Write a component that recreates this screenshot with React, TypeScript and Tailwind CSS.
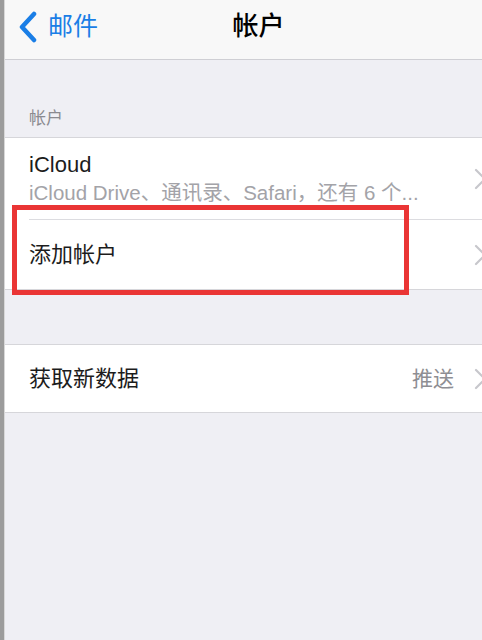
import React from "react";

const font = { fontFamily: '"Liberation Sans", "Noto Sans CJK SC", sans-serif' };

const Chevron = () => (
    <svg width="12" height="22" viewBox="0 0 12 22" className="shrink-0">
        <path d="M2 2 L11 11 L2 20" fill="none" stroke="#c7c7cc" strokeWidth="2.2" strokeLinecap="round" strokeLinejoin="round" />
    </svg>
);

const App = () => {
    return (
        <div className="flex w-[482px] h-[640px] overflow-hidden bg-[#efeff4]" style={font}>
            <div className="w-[5px] bg-[#9c9c9c] border-r border-[#d8d8d8] shrink-0"></div>
            <div className="relative flex flex-col flex-1 overflow-hidden">
                <div className="flex items-center h-[60px] pb-[6px] bg-[#f8f8f8] border-b border-[#cfcfd4]">
                    <div className="flex items-center pl-[13px] w-[160px] text-[#1a7ee6]">
                        <svg width="20" height="32" viewBox="0 0 20 32">
                            <path d="M16 3 L4 16 L16 29" fill="none" stroke="#1a7ee6" strokeWidth="4.5" strokeLinecap="round" strokeLinejoin="round" />
                        </svg>
                        <span className="ml-[10px] text-[25px] leading-none">邮件</span>
                    </div>
                    <div className="flex-1 text-center text-[26px] font-medium text-black pr-[130px]">
                        帐户
                    </div>
                </div>

                <div className="h-[77px] flex items-end px-[24px] pb-[6px] text-[17px] text-[#8a8a8f]">帐户</div>

                <div className="bg-white border-t border-b border-[#d6d6da]">
                    <div className="flex items-center h-[81px] pl-[24px]">
                        <div className="flex-1 flex flex-col min-w-0">
                            <span className="text-[22px] text-[#1c1c1c] leading-[26px]">iCloud</span>
                            <span className="text-[20.5px] text-[#a3a3a8] leading-[26px] whitespace-nowrap mt-[2px]">iCloud Drive、通讯录、Safari，还有 6 个...</span>
                        </div>
                        <div className="mr-[-4px] ml-[30px]"><Chevron /></div>
                    </div>
                    <div className="ml-[24px] h-px bg-[#dcdce0]"></div>
                    <div className="flex items-center h-[69px] pl-[24px]">
                        <span className="flex-1 text-[22px] text-[#1c1c1c]">添加帐户</span>
                        <div className="mr-[-4px]"><Chevron /></div>
                    </div>
                </div>

                <div className="h-[54px]"></div>

                <div className="bg-white border-t border-b border-[#d6d6da]">
                    <div className="flex items-center h-[67px] pl-[24px]">
                        <span className="flex-1 text-[22px] text-[#1c1c1c]">获取新数据</span>
                        <span className="text-[21px] text-[#8e8e93] mr-[20px]">推送</span>
                        <div className="mr-[-4px]"><Chevron /></div>
                    </div>
                </div>

                <div className="absolute left-[7px] top-[205px] w-[397px] h-[90px] border-[5px] border-[#ea3535]"></div>
            </div>
        </div>
    );
};

export default App;
